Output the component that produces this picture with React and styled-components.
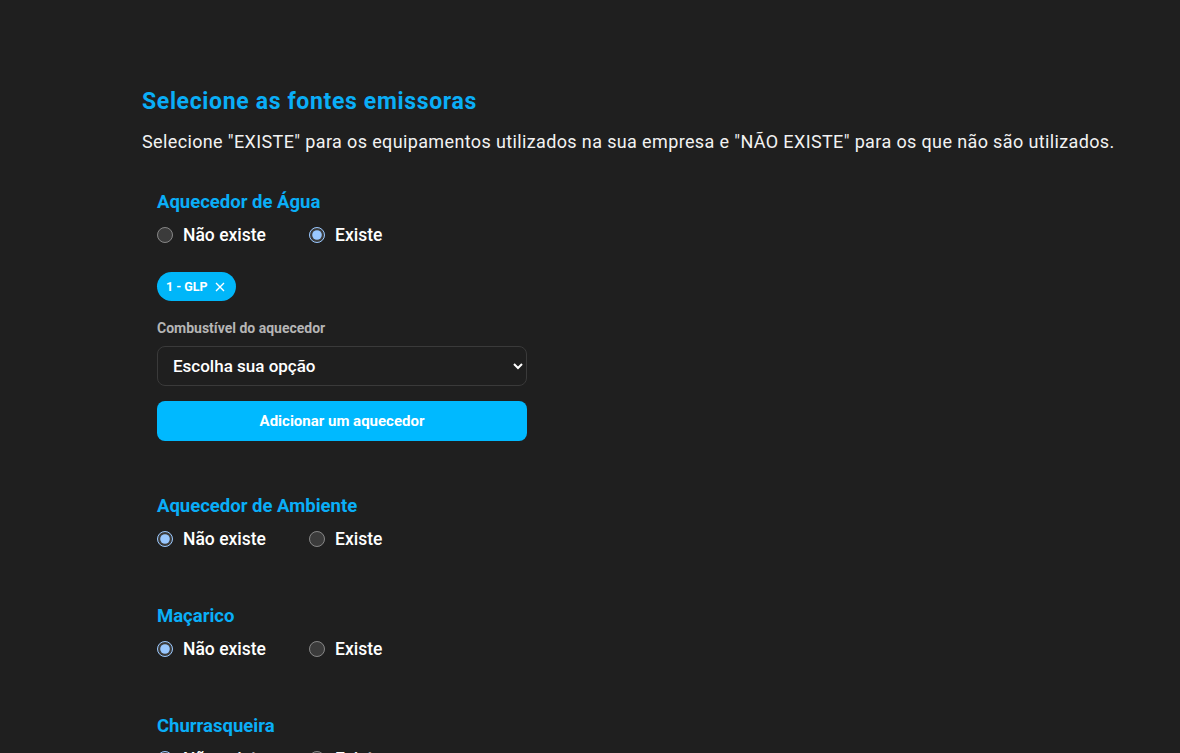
import styled, { createGlobalStyle } from "styled-components";

const GlobalStyle = createGlobalStyle`
	html, body {
		margin: 0;
		background: #1f1f1f;
		color-scheme: dark;
		font-family: Roboto, "Noto Sans", sans-serif;
		color: #ffffff;
	}
`;

const Page = styled.div`
	padding: 88px 0 0 142px;
	height: 665px;
	overflow: hidden;
`;

const Title = styled.h2`
	margin: 0;
	font-size: 23px;
	font-weight: 700;
	letter-spacing: 0.65px;
	color: #0aaef7;
	line-height: 28px;
`;

const Description = styled.p`
	margin: 13px 0 0;
	font-size: 18px;
	letter-spacing: 0.37px;
	line-height: 26px;
	color: #f2f2f2;
`;

const SectionList = styled.div`
	display: flex;
	flex-direction: column;
	padding: 0 0 0 15px;
	margin-top: 35px;
`;

const Section = styled.section`
	display: flex;
	flex-direction: column;
	margin-bottom: ${props => props.gap || "55px"};
`;

const SectionTitle = styled.h3`
	margin: 0;
	font-size: 18.5px;
	font-weight: 700;
	color: #0aaef7;
	line-height: 24px;
`;

const RadioRow = styled.div`
	display: flex;
	gap: 36px;
	margin-top: 11px;
`;

const RadioLabel = styled.label`
	display: flex;
	align-items: center;
	gap: 10px;
	width: 116px;
	font-size: 17.5px;
	font-weight: 500;
	line-height: 20px;
	color: #ffffff;

	input {
		margin: 0;
		width: 16px;
		height: 16px;
	}
`;

const Chip = styled.span`
	display: inline-flex;
	align-items: center;
	gap: 7px;
	align-self: flex-start;
	height: 29px;
	margin-top: 27px;
	padding: 0 11px 0 9px;
	border-radius: 15px;
	background: #00b6f9;
	font-size: 12.5px;
	font-weight: 700;
	color: #ffffff;
`;

const FieldLabel = styled.label`
	margin-top: 18px;
	font-size: 14px;
	font-weight: 700;
	color: #b5b5b5;
	line-height: 18px;
`;

const Select = styled.select`
	width: 370px;
	height: 40px;
	margin-top: 9px;
	padding: 0 10px 0 11px;
	border: 1px solid #3a3a3a;
	border-radius: 8px;
	background: #1f1f1f;
	color: #ffffff;
	font-family: inherit;
	font-size: 17px;
	font-weight: 500;
`;

const AddButton = styled.button`
	width: 370px;
	height: 40px;
	margin-top: 15px;
	border: none;
	border-radius: 8px;
	background: #00b9ff;
	color: #ffffff;
	font-family: inherit;
	font-size: 15px;
	font-weight: 700;
`;

const RadioPair = ({ name, value }) => (
	<RadioRow>
		<RadioLabel>
			<input type="radio" name={name} defaultChecked={value === "no"} />
			Não existe
		</RadioLabel>
		<RadioLabel>
			<input type="radio" name={name} defaultChecked={value === "yes"} />
			Existe
		</RadioLabel>
	</RadioRow>
);

const CloseIcon = () => (
	<svg width="10" height="10" viewBox="0 0 10 10" fill="none" stroke="#fff" strokeWidth="1.4">
		<path d="M1 1l8 8M9 1l-8 8" />
	</svg>
);

export default function App() {
	return (
		<>
			<GlobalStyle />
			<Page>
				<Title>Selecione as fontes emissoras</Title>
				<Description>
					Selecione "EXISTE" para os equipamentos utilizados na sua empresa e "NÃO EXISTE" para os que não são utilizados.
				</Description>
				<SectionList>
					<Section gap="53px">
						<SectionTitle>Aquecedor de Água</SectionTitle>
						<RadioPair name="agua" value="yes" />
						<Chip>
							1 - GLP <CloseIcon />
						</Chip>
						<FieldLabel>Combustível do aquecedor</FieldLabel>
						<Select defaultValue="">
							<option value="">Escolha sua opção</option>
							<option value="glp">GLP</option>
						</Select>
						<AddButton>Adicionar um aquecedor</AddButton>
					</Section>
					<Section>
						<SectionTitle>Aquecedor de Ambiente</SectionTitle>
						<RadioPair name="ambiente" value="no" />
					</Section>
					<Section>
						<SectionTitle>Maçarico</SectionTitle>
						<RadioPair name="macarico" value="no" />
					</Section>
					<Section>
						<SectionTitle>Churrasqueira</SectionTitle>
						<RadioPair name="churrasqueira" value="no" />
					</Section>
				</SectionList>
			</Page>
		</>
	);
}
